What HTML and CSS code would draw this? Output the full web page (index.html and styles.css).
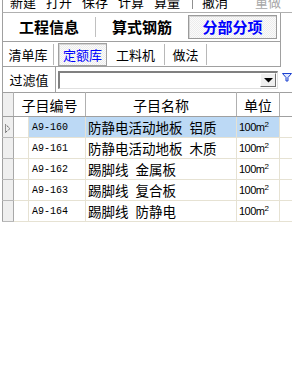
FILE: index.html
```html
<!DOCTYPE html>
<html lang="zh-CN">
<head>
  <meta charset="UTF-8">
  <title>分部分项</title>
  <link rel="stylesheet" href="styles.css">
</head>
<body>
  <div class="app">
    <!-- toolbar, scrolled partly out of view -->
    <div class="toolbar">
      <div class="toolbar-inner">
        <span class="tool">新建</span>
        <span class="tool">打开</span>
        <span class="tool">保存</span>
        <span class="tool">计算</span>
        <span class="tool">算量</span>
        <span class="tool-sep"></span>
        <span class="tool">撤消</span>
        <span class="tool disabled">重做</span>
      </div>
    </div>

    <div class="tabs-main">
      <div class="tab-main t1">工程信息</div>
      <div class="tab-main t2">算式钢筋</div>
      <div class="tab-main t3 active">分部分项</div>
    </div>

    <div class="tabs-sub">
      <div class="tab-sub s1">清单库</div>
      <div class="tab-sub s2 active">定额库</div>
      <div class="tab-sub s3">工料机</div>
      <div class="tab-sub s4">做法</div>
    </div>

    <div class="filter">
      <div class="filter-label">过滤值</div>
      <div class="combo">
        <div class="combo-btn">
          <svg width="9" height="5" viewBox="0 0 9 5"><polygon points="0,0 9,0 4.5,4.5" fill="#000"/></svg>
        </div>
      </div>
      <svg class="funnel" width="10" height="10" viewBox="0 0 10 10">
        <polygon points="0.5,1.5 9.5,1.5 6,5.5 6,9 4,9 4,5.5" fill="#dfe8ff" stroke="#1a3fd0" stroke-width="1"/>
      </svg>
    </div>

    <table class="grid">
      <colgroup>
        <col class="c-ind">
        <col class="c-blank">
        <col class="c-code">
        <col class="c-name">
        <col class="c-unit">
        <col>
      </colgroup>
      <thead>
        <tr>
          <th class="ind"></th>
          <th colspan="2">子目编号</th>
          <th>子目名称</th>
          <th>单位</th>
          <th class="fill"></th>
        </tr>
      </thead>
      <tbody id="gridBody">
      </tbody>
    </table>
  </div>

  <script>
    // 定额子目
    const items = [
      { code: 'A9-160', name: '防静电活动地板 铝质' },
      { code: 'A9-161', name: '防静电活动地板 木质' },
      { code: 'A9-162', name: '踢脚线 金属板' },
      { code: 'A9-163', name: '踢脚线 复合板' },
      { code: 'A9-164', name: '踢脚线 防静电' },
    ];

    const body = document.getElementById('gridBody');
    items.forEach((item, i) => {
      const row = document.createElement('tr');
      if (i === 0) row.className = 'selected';
      row.innerHTML = `
        <td class="ind">${i === 0 ? '<svg width="6" height="9" viewBox="0 0 6 9"><polyline points="0.5,0.5 5,4.5 0.5,8.5 0.5,0.5" fill="none" stroke="#333" stroke-width="1" stroke-dasharray="1 1"/></svg>' : ''}</td>
        <td class="blank"></td>
        <td class="code">${item.code}</td>
        <td class="name">${item.name}</td>
        <td class="unit">100m<sup>2</sup></td>
        <td class="fill"></td>
      `;
      body.appendChild(row);
    });
  </script>
</body>
</html>
```

FILE: styles.css
```css
body {
  margin: 0;
  background: #fff;
  font-family: "Noto Sans CJK SC", "DejaVu Sans", sans-serif;
  color: #000;
}
.app {
  width: 292px;
  height: 383px;
  overflow: hidden;
}

/* toolbar */
.toolbar {
  height: 12px;
  margin-left: 2px;
  border-left: 1px solid #a0a0a0;
  border-bottom: 1px solid #b0b0b0;
  overflow: hidden;
}
.toolbar-inner {
  display: flex;
  align-items: center;
  height: 14px;
  margin-top: -5px;
  padding-left: 7px;
  font-size: 13px;
  line-height: 14px;
}
.tool {
  margin-right: 10px;
  white-space: nowrap;
}
.tool.disabled {
  color: #a8a8a8;
  margin-left: 17px;
}
.tool-sep {
  width: 1px;
  height: 14px;
  background: #909090;
  margin: 0 9px 0 2px;
}

/* main tabs */
.tabs-main {
  display: flex;
  height: 28px;
  margin-left: 2px;
  width: 277px;
  border-left: 1px solid #a0a0a0;
  border-right: 1px solid #a0a0a0;
  border-bottom: 1px solid #a0a0a0;
  align-items: center;
}
.tab-main {
  flex: none;
  font-size: 15px;
  font-weight: bold;
  text-align: center;
  height: 22px;
  line-height: 22px;
}
.tab-main.t1 {
  width: 92px;
  border-right: 1px solid #c0c0c0;
  height: 20px;
  line-height: 20px;
}
.tab-main.t2 {
  width: 92px;
}
.tab-main.t3 {
  width: 87px;
}
.tab-main.active {
  color: #0000ff;
  border: 1px solid #9a9a9a;
  box-shadow: inset 1px 1px 0 #d4d4d4;
  background: repeating-conic-gradient(#ececec 0 25%, #fbfbfb 0 50%) 0 0 / 2px 2px;
}

/* sub tabs */
.tabs-sub {
  display: flex;
  height: 24px;
  margin-left: 2px;
  width: 277px;
  border-left: 1px solid #a0a0a0;
  border-right: 1px solid #a0a0a0;
  border-bottom: 1px solid #a0a0a0;
  align-items: center;
  font-size: 13px;
}
.tab-sub {
  flex: none;
  text-align: center;
  height: 21px;
  line-height: 21px;
  border-right: 1px solid #b8b8b8;
}
.tab-sub.s1 { width: 50px; }
.tab-sub.s2 { width: 47px; margin-left: 4px; }
.tab-sub.s3 { width: 57px; }
.tab-sub.s4 { width: 41px; }
.tab-sub.active {
  color: #0000ff;
  border: 1px solid #a0a0a0;
  box-shadow: inset 1px 1px 0 #d4d4d4;
  background: repeating-conic-gradient(#ececec 0 25%, #fbfbfb 0 50%) 0 0 / 2px 2px;
}

/* filter row */
.filter {
  display: flex;
  align-items: center;
  height: 25px;
  margin-left: 2px;
  border-left: 1px solid #a0a0a0;
}
.filter-label {
  width: 52px;
  height: 25px;
  line-height: 25px;
  font-size: 13px;
  text-align: center;
  border-right: 1px solid #a0a0a0;
}
.combo {
  display: flex;
  justify-content: flex-end;
  align-items: center;
  margin-left: 2px;
  width: 217px;
  height: 15px;
  border-top: 2px solid #808080;
  border-left: 2px solid #808080;
  border-bottom: 1px solid #e0e0e0;
  border-right: 1px solid #e0e0e0;
  padding-right: 1px;
}
.combo-btn {
  display: flex;
  align-items: center;
  justify-content: center;
  background: #f0f0f0;
  border: 1px solid #fff;
  border-right-color: #707070;
  border-bottom-color: #707070;
  box-sizing: border-box;
  height: 14px;
  width: 16px;
}
.funnel {
  margin-left: 4px;
  margin-top: -6px;
}

/* grid */
.grid {
  margin-left: 2px;
  width: 290px;
  border-collapse: collapse;
  table-layout: fixed;
  font-size: 13px;
}
.c-ind { width: 11px; }
.c-blank { width: 15px; }
.c-code { width: 57px; }
.c-name { width: 151px; }
.c-unit { width: 43px; }
.grid th {
  height: 23px;
  font-weight: normal;
  font-size: 14px;
  text-align: center;
  border-top: 1px solid #a0a0a0;
  border-bottom: 1px solid #a0a0a0;
  border-right: 1px solid #b0b0b0;
  padding: 0;
  background: #fff;
}
.grid th.ind {
  border-left: 1px solid #a0a0a0;
  background: #efefef;
}
.grid th.fill {
  border-right: none;
}
.grid td {
  height: 19px;
  padding: 0 0 0 3px;
  border-bottom: 1px solid #e6e2d3;
  border-right: 1px solid #e6e2d3;
  white-space: nowrap;
  overflow: hidden;
}
.grid td.ind {
  padding: 0 0 0 2px;
  background: #efefef;
  border-left: 1px solid #a0a0a0;
  border-right: 1px solid #a8a8a8;
  border-bottom: 1px solid #b8b8b8;
}
.grid td.blank {
  background: #fff;
}
.grid td.code {
  font-family: "Liberation Mono", monospace;
  font-size: 10px;
}
.grid td.name {
  font-size: 13.5px;
  word-spacing: 4px;
  padding-left: 2px;
}
.grid td.unit {
  font-family: "Liberation Sans", sans-serif;
  font-size: 11px;
  letter-spacing: -0.5px;
  padding-left: 2px;
}
.grid td.unit sup {
  font-size: 8px;
  vertical-align: 4px;
  line-height: 0;
}
.grid td.fill {
  border-right: none;
}
.grid tr.selected td {
  background: #bcd9f5;
}
.grid tr.selected td.ind {
  background: #efefef;
}
.grid tr.selected td.blank,
.grid tr.selected td.fill {
  background: #fff;
}
```
